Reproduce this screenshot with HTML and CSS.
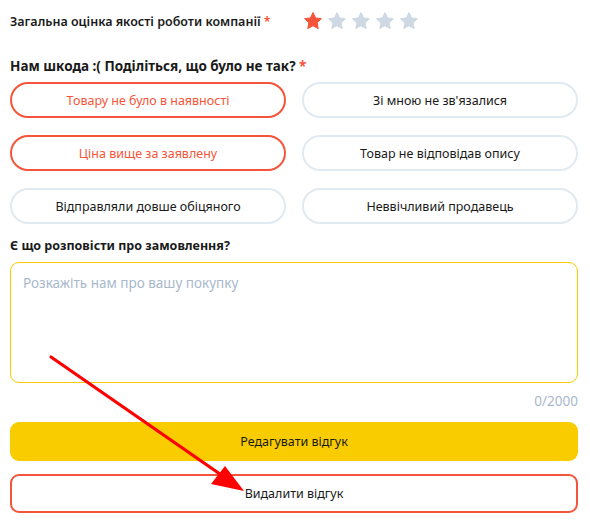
FILE: index.html
```html
<!DOCTYPE html>
<html lang="uk">
<head>
  <meta charset="UTF-8" />
  <title>Відгук</title>
  <link rel="stylesheet" href="styles.css">
</head>
<body>
  <main class="review">
    <div class="rating-row">
      <span class="label">Загальна оцінка якості роботи компанії <span class="req">*</span></span>
      <div class="stars">
        <svg class="star on" viewBox="0 0 24 24"><path d="M12 1.8l3.1 6.5 7 .9-5.1 4.9 1.3 7-6.3-3.4-6.3 3.4 1.3-7L1.9 9.2l7-.9z"/></svg>
        <svg class="star" viewBox="0 0 24 24"><path d="M12 1.8l3.1 6.5 7 .9-5.1 4.9 1.3 7-6.3-3.4-6.3 3.4 1.3-7L1.9 9.2l7-.9z"/></svg>
        <svg class="star" viewBox="0 0 24 24"><path d="M12 1.8l3.1 6.5 7 .9-5.1 4.9 1.3 7-6.3-3.4-6.3 3.4 1.3-7L1.9 9.2l7-.9z"/></svg>
        <svg class="star" viewBox="0 0 24 24"><path d="M12 1.8l3.1 6.5 7 .9-5.1 4.9 1.3 7-6.3-3.4-6.3 3.4 1.3-7L1.9 9.2l7-.9z"/></svg>
        <svg class="star" viewBox="0 0 24 24"><path d="M12 1.8l3.1 6.5 7 .9-5.1 4.9 1.3 7-6.3-3.4-6.3 3.4 1.3-7L1.9 9.2l7-.9z"/></svg>
      </div>
    </div>

    <h2 class="heading">Нам шкода :( Поділіться, що було не так? <span class="req">*</span></h2>

    <div class="chips">
      <button class="chip active">Товару не було в наявності</button>
      <button class="chip">Зі мною не зв'язалися</button>
      <button class="chip active">Ціна вище за заявлену</button>
      <button class="chip">Товар не відповідав опису</button>
      <button class="chip">Відправляли довше обіцяного</button>
      <button class="chip">Неввічливий продавець</button>
    </div>

    <h3 class="subheading">Є що розповісти про замовлення?</h3>
    <textarea class="comment" placeholder="Розкажіть нам про вашу покупку"></textarea>
    <div class="counter">0/2000</div>

    <button class="btn btn-edit">Редагувати відгук</button>
    <button class="btn btn-delete">Видалити відгук</button>
  </main>

  <svg class="arrow" width="590" height="524" viewBox="0 0 590 524">
    <line x1="51" y1="357" x2="230" y2="481" stroke="#ff0000" stroke-width="3.2" stroke-linecap="round"/>
    <polygon points="244,491 211,484 225,466" fill="#ff0000"/>
  </svg>
</body>
</html>
```

FILE: styles.css
```css
* {
  box-sizing: border-box;
}

body {
  margin: 0;
  background: #ffffff;
  color: #1a1a1a;
  font-family: "Noto Sans", "Open Sans", sans-serif;
  position: relative;
  width: 590px;
  height: 524px;
  overflow: hidden;
}

.review {
  padding: 8px 12px 0 10px;
  display: flex;
  flex-direction: column;
}

.rating-row {
  display: flex;
  align-items: center;
  height: 26px;
}

.label {
  font-size: 12.5px;
  font-weight: 600;
  width: 293px;
}

.req {
  color: #f4553a;
}

.stars {
  display: flex;
  gap: 4px;
}

.star {
  width: 20px;
  height: 20px;
  fill: #cfd9e3;
  stroke: #cfd9e3;
  stroke-width: 1.2;
  stroke-linejoin: round;
}

.star.on {
  fill: #f4553a;
  stroke: #f4553a;
}

.heading {
  margin: 23px 0 0;
  font-size: 13.5px;
  font-weight: 700;
  line-height: 18px;
}

.chips {
  margin-top: 7px;
  display: grid;
  grid-template-columns: 276px 276px;
  column-gap: 16px;
  row-gap: 17px;
}

.chip {
  height: 36px;
  border: 2px solid #e1e9f1;
  border-radius: 18px;
  background: #ffffff;
  font-family: inherit;
  font-size: 12.5px;
  color: #1a1a1a;
  cursor: pointer;
}

.chip.active {
  border-color: #f4553a;
  color: #f4553a;
}

.subheading {
  margin: 13px 0 0;
  font-size: 12.5px;
  font-weight: 700;
  line-height: 17px;
}

.comment {
  margin-top: 8px;
  width: 568px;
  height: 121px;
  border: 1px solid #f9cc00;
  border-radius: 9px;
  padding: 11px 12px;
  font-family: inherit;
  font-size: 13.5px;
  resize: none;
  outline: none;
}

.comment::placeholder {
  color: #a9b9cc;
}

.counter {
  text-align: right;
  font-size: 13.5px;
  color: #a9b9cc;
  margin-top: 9px;
  line-height: 18px;
}

.btn {
  width: 568px;
  height: 39px;
  border-radius: 9px;
  font-family: inherit;
  font-size: 12.5px;
  color: #1a1a1a;
  cursor: pointer;
}

.btn-edit {
  margin-top: 12px;
  background: #f9cc00;
  border: none;
}

.btn-delete {
  margin-top: 13px;
  background: #ffffff;
  border: 2px solid #f4553a;
}

.arrow {
  position: absolute;
  left: 0;
  top: 0;
  pointer-events: none;
}
```
